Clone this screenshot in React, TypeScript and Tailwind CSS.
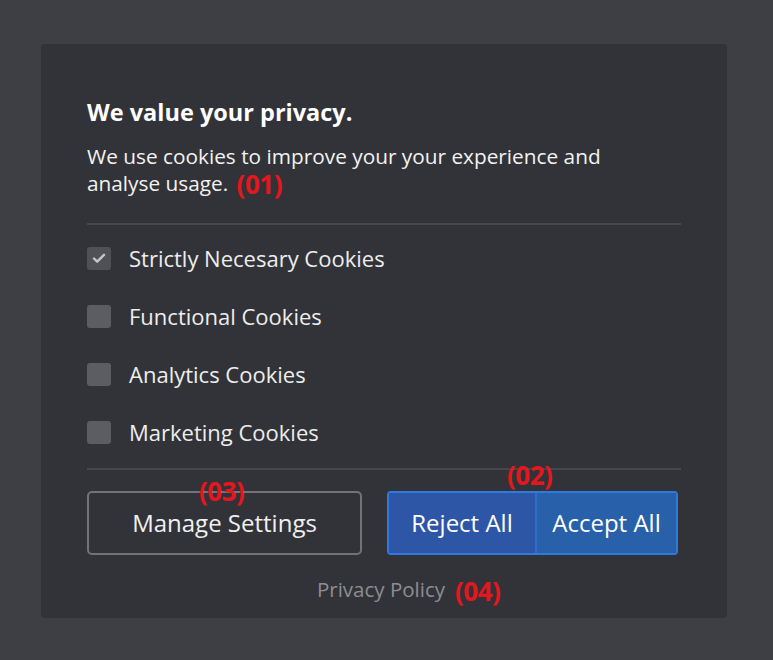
import { useState } from "react";

const cookieOptions = [
  { label: "Strictly Necesary Cookies", locked: true },
  { label: "Functional Cookies", locked: false },
  { label: "Analytics Cookies", locked: false },
  { label: "Marketing Cookies", locked: false },
];

function Marker({ n }: { n: string }) {
  return (
    <span className="font-['Open_Sans',sans-serif] text-[26px] font-bold leading-none tracking-[-0.5px] text-[#e5161d]">
      ({n})
    </span>
  );
}

export default function App() {
  const [checked, setChecked] = useState<boolean[]>([true, false, false, false]);

  const toggle = (i: number) => {
    if (cookieOptions[i].locked) return;
    setChecked((prev) => prev.map((v, idx) => (idx === i ? !v : v)));
  };

  return (
    <div className="h-[660px] w-full bg-[#3e3f45] pl-[41px] pt-[44px] font-['Open_Sans','Noto_Sans',sans-serif]">
      <div className="flex h-[574px] w-[686px] flex-col rounded-[4px] bg-[#323338] px-[46px] pt-[53px]">
        <h2 className="text-[23.5px] font-bold leading-[30px] text-white">We value your privacy.</h2>
        <p className="mt-[16px] text-[20.8px] leading-[27px] text-[#f2f2f2]">
          We use cookies to improve your your experience and
          <br />
          analyse usage.{" "}
          <span className="ml-[3px] inline-block align-[-3px]">
            <Marker n="01" />
          </span>
        </p>

        <div className="mt-[23px] h-[2px] w-full bg-[#46474c]" />

        <ul className="mt-[4px] flex flex-col">
          {cookieOptions.map((opt, i) => (
            <li key={opt.label} className="flex h-[58px] items-center gap-[18px]">
              <button
                type="button"
                aria-pressed={checked[i]}
                onClick={() => toggle(i)}
                className={`flex h-[23px] w-[24px] items-center justify-center rounded-[3px] ${
                  opt.locked ? "bg-[#505156]" : "bg-[#5c5d62]"
                }`}
              >
                {checked[i] ? (
                  <svg width="16" height="16" viewBox="0 0 16 16" fill="none">
                    <path
                      d="M3 8.5l3.2 3.2L13 4.8"
                      stroke="#c4c5c8"
                      strokeWidth="2.4"
                      strokeLinecap="round"
                      strokeLinejoin="round"
                    />
                  </svg>
                ) : null}
              </button>
              <span className="text-[22px] leading-[28px] text-[#ededed]">{opt.label}</span>
            </li>
          ))}
        </ul>

        <div className="mt-[7px] h-[2px] w-full bg-[#46474c]" />

        <div className="relative mt-[21px] flex h-[64px] items-stretch pr-[3px]">
          <button
            type="button"
            className="w-[275px] rounded-[5px] border-2 border-[#727378] text-[24px] text-[#f0f0f0]"
          >
            Manage Settings
          </button>
          <div className="ml-[25px] flex flex-1 overflow-hidden rounded-[4px] border-2 border-[#2f7ae0]">
            <button type="button" className="w-[146px] bg-[#2d56a6] text-[24px] text-white">
              Reject All
            </button>
            <button
              type="button"
              className="flex-1 border-l-2 border-[#2a6fd0] bg-[#2861a9] text-[24px] text-white"
            >
              Accept All
            </button>
          </div>
          <div className="absolute left-[112px] top-[-13px]">
            <Marker n="03" />
          </div>
          <div className="absolute left-[420px] top-[-29px]">
            <Marker n="02" />
          </div>
        </div>

        <div className="mt-[20px] flex justify-center">
          <div className="relative ml-[-6px]">
            <a href="#" className="text-[20.5px] leading-[28px] text-[#8c8d92]">
              Privacy Policy
            </a>
            <div className="absolute left-[calc(100%+10px)] top-[3px] whitespace-nowrap">
              <Marker n="04" />
            </div>
          </div>
        </div>
      </div>
    </div>
  );
}
